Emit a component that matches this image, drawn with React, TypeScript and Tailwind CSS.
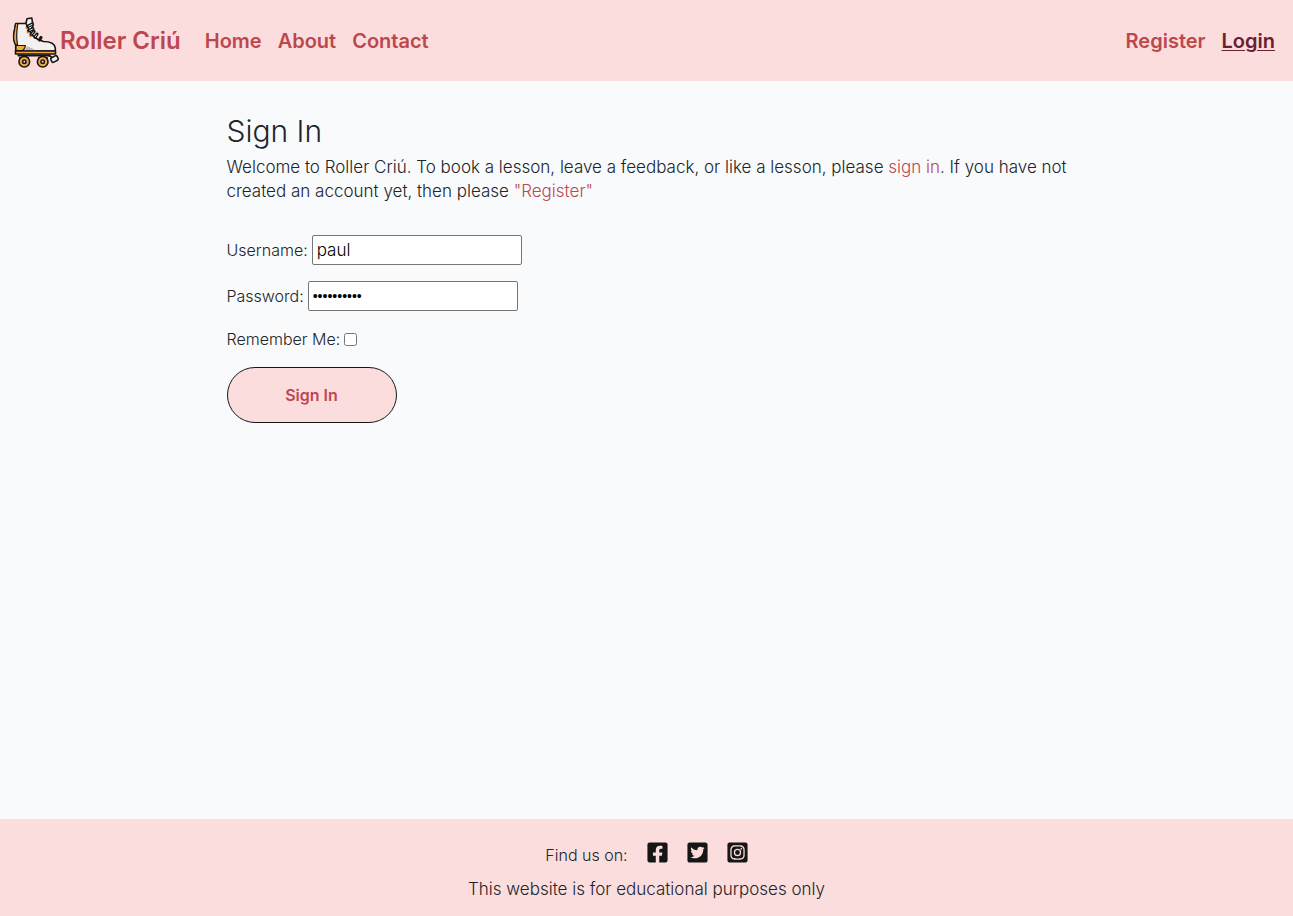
import { useState } from "react";
import type { ReactNode } from "react";
import { FaFacebookSquare, FaInstagramSquare, FaTwitterSquare } from "react-icons/fa";

function SkateLogo() {
  return (
    <svg viewBox="0 -3 48 53" className="h-[53px] w-12 shrink-0 overflow-visible" aria-hidden="true">
      <g stroke="#161616" strokeWidth="1.6" strokeLinejoin="round" strokeLinecap="round">
        <path d="M14 6l1-4.200 4.800-.8 1.200 8-3 5-4-4z" fill="#f3f1f0" />
        <path d="M3.700 6.500H14l2.500 5.500 3.500 6 6 4.500 5.500 2c4 0 11 .8 11.800 6.500V34H3.700V28C1.500 24 1.200 19 2.300 14z" fill="#f3f1f0" />
        <path d="M3.700 6.500L2.300 14C1.200 19 1.500 24 3.700 28l1.800-.5C4.300 22 4.300 16 5.800 6.500z" fill="#f6a83c" strokeWidth="1.200" />
        <path d="M4 28.500h9.500c-.3 2.500-1.500 4-3 5.200H4z" fill="#f6a83c" strokeWidth="1.200" />
        <path d="M14.500 29.500c4 0 6.500 3.500 11 4H12c1.500-1 2.200-2 2.500-4z" fill="#bfb5b2" stroke="none" />
        <path d="M3.500 34h40v3h-40z" fill="#f6a83c" />
        <path d="M6.500 38.500h31M8 41h8M27 41h8" fill="none" strokeWidth="2.200" />
        <circle cx="12.300" cy="44.700" r="5.300" fill="#f6a83c" />
        <circle cx="30.700" cy="44.700" r="5.300" fill="#f6a83c" />
        <circle cx="12.300" cy="44.700" r="1.700" fill="#f3f1f0" />
        <circle cx="30.700" cy="44.700" r="1.700" fill="#f3f1f0" />
        <path d="M36 38l3.500 2" />
        <rect x="39" y="39.500" width="7" height="5" rx="1.500" fill="#f3f1f0" transform="rotate(-28 42.500 42)" />
        <path d="M15.500 9.500l5-2.500M16.500 13.800l4.500-2M19 17.500l3-3M23 20.200l2-3M27.500 23l1.500-2.500" fill="none" strokeWidth="3.200" />
        <path d="M16.800 9l3.200-1.600M17.800 13.300l2.600-1.200M19.800 16.800l1.600-1.600M23.500 19.500l1-1.500" fill="none" stroke="#f3f1f0" strokeWidth="1" />
      </g>
      <path d="M13.800 10l1 2M15 14.500l1 1.800M17.500 18.500l1.500 1.400" stroke="#e4782e" strokeWidth="1.500" />
    </svg>
  );
}

function NavLink({ href, active = false, children }: { href: string; active?: boolean; children: ReactNode }) {
  return (
    <a
      href={href}
      className={active ? "text-[#6a2030] underline decoration-1 underline-offset-2" : "text-[#bc474f]"}
    >
      {children}
    </a>
  );
}

const socials = [
  { name: "Facebook", href: "#facebook", Icon: FaFacebookSquare },
  { name: "Twitter", href: "#twitter", Icon: FaTwitterSquare },
  { name: "Instagram", href: "#instagram", Icon: FaInstagramSquare },
];

export default function App() {
  const [username, setUsername] = useState("paul");
  const [password, setPassword] = useState("rollercriu");
  const [remember, setRemember] = useState(false);

  return (
    <div className="flex min-h-screen flex-col bg-[#f9fafc] font-['Inter',sans-serif] text-base font-light text-[#212529]">
      <header className="flex items-center justify-between bg-[#fcdddd] py-[14px] pr-[18px] pl-3 text-xl font-semibold">
        <nav aria-label="Main" className="flex items-center gap-6">
          <a href="#home" className="flex items-center text-2xl text-[#bc474f]">
            <SkateLogo />
            Roller Criú
          </a>
          <div className="flex gap-4">
            <NavLink href="#home">Home</NavLink>
            <NavLink href="#about">About</NavLink>
            <NavLink href="#contact">Contact</NavLink>
          </div>
        </nav>
        <nav aria-label="Account" className="flex gap-4">
          <NavLink href="#register">Register</NavLink>
          <NavLink href="#login" active>Login</NavLink>
        </nav>
      </header>

      <main className="mx-auto w-full max-w-[856px] grow px-2 pt-8">
        <h1 className="mb-[6px] text-3xl leading-9">Sign In</h1>
        <p className="-mr-2 text-[17px] leading-6">
          Welcome to Roller Criú. To book a lesson, leave a feedback, or like a lesson, please{" "}
          <a href="#login" className="text-[#bc474f]">sign in</a>. If you have not created an account yet, then please{" "}
          <a href="#register" className="text-[#bc474f]">"Register"</a>
        </p>
        <form className="mt-8 flex flex-col items-start gap-4" onSubmit={(e) => e.preventDefault()}>
          <div className="flex items-center gap-1">
            <label htmlFor="username">Username:</label>
            <input
              id="username"
              type="text"
              value={username}
              onChange={(e) => setUsername(e.target.value)}
              className="h-[30px] w-[210px] rounded-[2px] border border-[#767676] bg-white px-1 text-[17px] text-black"
            />
          </div>
          <div className="flex items-center gap-1">
            <label htmlFor="password">Password:</label>
            <input
              id="password"
              type="password"
              value={password}
              onChange={(e) => setPassword(e.target.value)}
              className="h-[30px] w-[210px] rounded-[2px] border border-[#767676] bg-white px-1 font-['Liberation_Sans',sans-serif] text-sm text-black"
            />
          </div>
          <div className="flex items-center gap-1">
            <label htmlFor="remember">Remember Me:</label>
            <input
              id="remember"
              type="checkbox"
              checked={remember}
              onChange={(e) => setRemember(e.target.checked)}
              className="size-[13px]"
            />
          </div>
          <button
            type="submit"
            className="h-14 w-[170px] rounded-full border border-[#161616] bg-[#fcdddd] font-semibold text-[#bc474f]"
          >
            Sign In
          </button>
        </form>
      </main>

      <footer className="flex flex-col items-center gap-[10px] bg-[#fcdddd] pt-5 pb-[15px]">
        <div className="flex items-start gap-5">
          <span className="pt-1">Find us on:</span>
          {socials.map(({ name, href, Icon }) => (
            <a key={name} href={href} aria-label={name} className="flex h-[26px] w-5 items-center justify-center text-[23px] text-[#161616]">
              <Icon className="shrink-0" />
            </a>
          ))}
        </div>
        <p className="text-[17px] leading-6">This website is for educational purposes only</p>
      </footer>
    </div>
  );
}
